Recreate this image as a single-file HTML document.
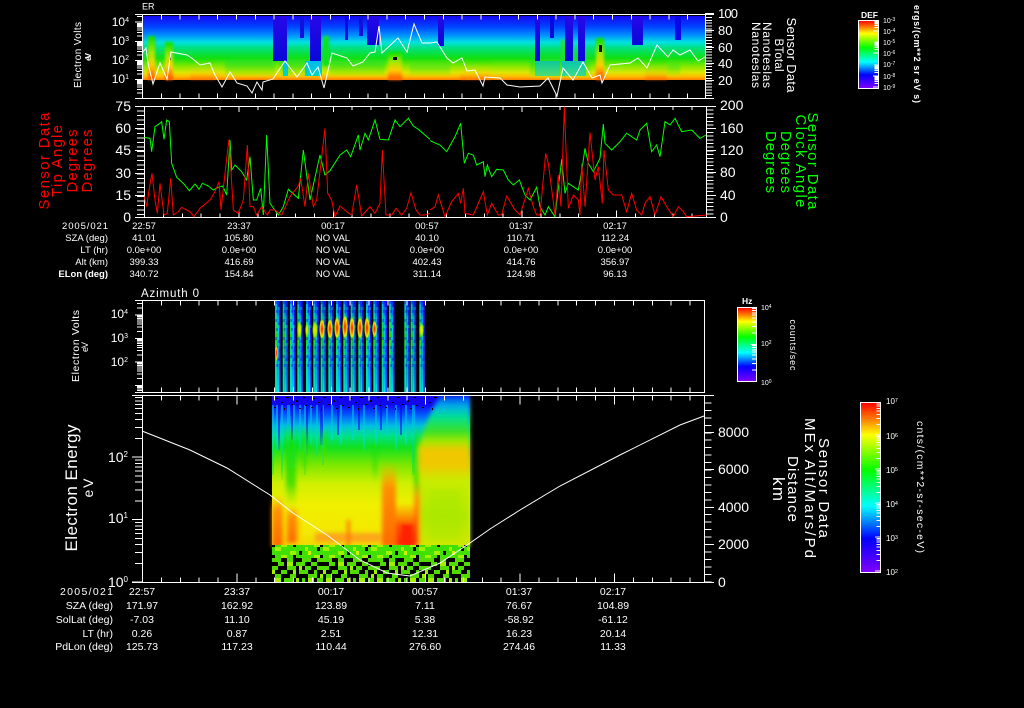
<!DOCTYPE html>
<html><head><meta charset="utf-8"><style>
html,body{margin:0;padding:0;background:#000;width:1024px;height:708px;overflow:hidden}
svg{display:block}
text{font-family:"Liberation Sans",sans-serif;fill:#fff}
.c{text-anchor:middle;font-size:9.5px}
.r{text-anchor:end;font-size:9.5px}
.d{text-anchor:middle;font-size:10.5px}
.q{text-anchor:end;font-size:10.5px}
.n{font-size:14px;text-anchor:end}
.m{font-size:14px}
.a{text-anchor:middle}
.ln{fill:none;vector-effect:non-scaling-stroke;stroke-width:1}
</style></head><body>
<svg width="1024" height="708" viewBox="0 0 1024 708" xmlns="http://www.w3.org/2000/svg">
<defs>
<linearGradient id="rb" x1="0" y1="0" x2="0" y2="1"><stop offset="0" stop-color="#f00"/><stop offset=".1" stop-color="#ff8000"/><stop offset=".19" stop-color="#ff0"/><stop offset=".4" stop-color="#0f0"/><stop offset=".61" stop-color="#0ff"/><stop offset=".8" stop-color="#00f"/><stop offset="1" stop-color="#8000ff"/></linearGradient>
<linearGradient id="g1" gradientUnits="userSpaceOnUse" x1="0" y1="16" x2="0" y2="80"><stop offset="0" stop-color="#1808f0"/><stop offset=".16" stop-color="#0040ff"/><stop offset=".3" stop-color="#0090ff"/><stop offset=".41" stop-color="#00e0e0"/><stop offset=".5" stop-color="#00e080"/><stop offset=".66" stop-color="#10e010"/><stop offset=".78" stop-color="#80e800"/><stop offset=".88" stop-color="#d8e800"/><stop offset=".94" stop-color="#ffc000"/><stop offset="1" stop-color="#ff8000"/></linearGradient>
<linearGradient id="gr" x1="0" y1="0" x2="0" y2="1"><stop offset="0" stop-color="#00e080" stop-opacity="0"/><stop offset=".4" stop-color="#20e020"/><stop offset=".9" stop-color="#a0e800"/><stop offset="1" stop-color="#e0e000"/></linearGradient>
<linearGradient id="hotc" x1="0" y1="0" x2="0" y2="1"><stop offset="0" stop-color="#00e000"/><stop offset=".35" stop-color="#a0e800"/><stop offset=".65" stop-color="#ffd000"/><stop offset=".85" stop-color="#ff8000"/><stop offset="1" stop-color="#ff5000"/></linearGradient>
<linearGradient id="dp" x1="0" y1="0" x2="0" y2="1"><stop offset="0" stop-color="#2808e8"/><stop offset="1" stop-color="#0808d8"/></linearGradient>
<linearGradient id="lowc" x1="0" y1="0" x2="0" y2="1"><stop offset="0" stop-color="#00b8f0"/><stop offset="1" stop-color="#00d8c0"/></linearGradient>
<linearGradient id="g4" gradientUnits="userSpaceOnUse" x1="0" y1="396" x2="0" y2="547"><stop offset="0" stop-color="#1408e8"/><stop offset=".06" stop-color="#1008f0"/><stop offset=".13" stop-color="#0060ff"/><stop offset=".2" stop-color="#00c0e0"/><stop offset=".26" stop-color="#00e090"/><stop offset=".34" stop-color="#10e020"/><stop offset=".46" stop-color="#80e800"/><stop offset=".58" stop-color="#d0f000"/><stop offset=".72" stop-color="#f0f000"/><stop offset=".9" stop-color="#f4e800"/><stop offset="1" stop-color="#f0d800"/></linearGradient>
<linearGradient id="rt" gradientUnits="userSpaceOnUse" x1="0" y1="396" x2="0" y2="547"><stop offset="0" stop-color="#0040f0"/><stop offset=".07" stop-color="#00b0e8"/><stop offset=".14" stop-color="#00e090"/><stop offset=".24" stop-color="#40e020"/><stop offset=".3" stop-color="#a0e800"/><stop offset=".36" stop-color="#f0c800"/><stop offset=".46" stop-color="#f0c800"/><stop offset=".56" stop-color="#c8ec00"/><stop offset=".8" stop-color="#b0e800"/><stop offset="1" stop-color="#d0e800"/></linearGradient>
<linearGradient id="gs" x1="0" y1="0" x2="0" y2="1"><stop offset="0" stop-color="#20e000" stop-opacity="0"/><stop offset=".25" stop-color="#10e010"/><stop offset=".7" stop-color="#50e000"/><stop offset="1" stop-color="#c0e800" stop-opacity="0"/></linearGradient>
<linearGradient id="or" x1="0" y1="0" x2="0" y2="1"><stop offset="0" stop-color="#ffa000" stop-opacity="0"/><stop offset=".3" stop-color="#ff9000"/><stop offset="1" stop-color="#ff6800"/></linearGradient>
<linearGradient id="rd" x1="0" y1="0" x2="0" y2="1"><stop offset="0" stop-color="#ff8000" stop-opacity=".2"/><stop offset=".5" stop-color="#ff4800"/><stop offset="1" stop-color="#ff2000"/></linearGradient>
<linearGradient id="strk" gradientUnits="userSpaceOnUse" x1="0" y1="405" x2="0" y2="490"><stop offset="0" stop-color="#00a0ff" stop-opacity=".7"/><stop offset=".4" stop-color="#00e0c0" stop-opacity=".7"/><stop offset=".75" stop-color="#00e040" stop-opacity=".45"/><stop offset="1" stop-color="#40e000" stop-opacity="0"/></linearGradient>
<linearGradient id="strkb" gradientUnits="userSpaceOnUse" x1="0" y1="400" x2="0" y2="460"><stop offset="0" stop-color="#1000e0" stop-opacity=".8"/><stop offset=".6" stop-color="#0040f0" stop-opacity=".7"/><stop offset="1" stop-color="#00a0e0" stop-opacity="0"/></linearGradient>
<linearGradient id="sa" x1="0" y1="0" x2="0" y2="1"><stop offset="0" stop-color="#00a0ff"/><stop offset=".2" stop-color="#00e0a0"/><stop offset=".37" stop-color="#20e000"/><stop offset=".65" stop-color="#00e0a0"/><stop offset="1" stop-color="#00e0c0"/></linearGradient>
<linearGradient id="sb" x1="0" y1="0" x2="0" y2="1"><stop offset="0" stop-color="#0020ff"/><stop offset=".3" stop-color="#00d0ff"/><stop offset=".65" stop-color="#0080ff"/><stop offset="1" stop-color="#00e0f0"/></linearGradient>
<linearGradient id="sc" x1="0" y1="0" x2="0" y2="1"><stop offset="0" stop-color="#2000e0"/><stop offset="1" stop-color="#0060ff"/></linearGradient>
<radialGradient id="hot"><stop offset="0" stop-color="#ff1000"/><stop offset=".4" stop-color="#ff8000"/><stop offset=".7" stop-color="#f0f000"/><stop offset="1" stop-color="#40e000" stop-opacity="0"/></radialGradient>
<radialGradient id="ywl"><stop offset="0" stop-color="#f0f000"/><stop offset=".6" stop-color="#a0e800"/><stop offset="1" stop-color="#40e000" stop-opacity="0"/></radialGradient>
<filter id="b1" x="-30%" y="-30%" width="160%" height="160%"><feGaussianBlur stdDeviation="1.2"/></filter>
<filter id="b2" x="-40%" y="-30%" width="180%" height="160%"><feGaussianBlur stdDeviation="2"/></filter>
<pattern id="nzA" patternUnits="userSpaceOnUse" x="272" y="547" width="48" height="12">
<rect width="48" height="12" fill="#40e000"/><path fill="#a0f000" d="M3 0h6v4H3zM18 4h6v4h-6zM33 0h3v4h-3zM42 8h6v4h-6zM9 8h6v4H9z"/><path fill="#000" d="M27 4h3v4h-3zM45 0h3v4h-3zM0 8h3v4H0zM21 8h3v4h-3z"/><path fill="#d0f000" d="M36 4h3v4h-3z"/>
</pattern>
<pattern id="nzB" patternUnits="userSpaceOnUse" x="272" y="558" width="51" height="24">
<rect width="51" height="24" fill="#000"/>
<path fill="#50dc00" d="M0 0h9v4H0zM15 0h6v4h-6zM30 0h9v4h-9zM45 0h6v4h-6zM6 4h6v4H6zM24 4h9v4h-9zM39 4h6v4h-6zM0 8h6v4H0zM15 8h9v4h-9zM33 8h6v4h-6zM45 8h6v4h-6zM9 12h6v4H9zM27 12h9v4h-9zM42 12h3v4h-3zM3 16h6v4H3zM18 16h6v4h-6zM36 16h9v4h-9zM12 20h9v4h-9zM30 20h3v4h-3zM45 20h6v4h-6z"/>
<path fill="#a0f000" d="M15 4h6v4h-6zM27 8h3v4h-3zM0 12h3v4H0zM21 12h3v4h-3zM48 16h3v4h-3zM24 20h3v4h-3zM36 20h6v4h-6zM3 20h6v4H3z"/>
</pattern>
<pattern id="spk" patternUnits="userSpaceOnUse" x="272" y="396" width="37" height="15">
<path fill="#000" d="M4 2h2v1H4zM14 1h3v1h-3zM24 4h2v2h-2zM31 1h2v1h-2zM9 6h2v1H9zM19 8h2v1h-2zM33 9h2v1h-2zM2 11h2v1H2zM27 12h2v1h-2zM12 12h1v2h-1z"/>
</pattern>
<pattern id="blot" patternUnits="userSpaceOnUse" x="0" y="301" width="6" height="18">
<path fill="#0010e0" fill-opacity=".4" d="M0 0h2v3H0zM3 3h2v3H3zM1 9h2v3H1zM4 12h2v3H4z"/><path fill="#00d0b0" fill-opacity=".4" d="M3 6h2v3H3zM0 12h2v3H0zM2 15h2v3H2z"/>
</pattern>
<path id="dec" class="ln" stroke="#fff" d="M-5-5.75H0M-5-9.1H0M-5-11.5H0M-5-13.4H0M-5-14.9H0M-5-16.1H0M-5-17.2H0M-5-18.2H0M-7 0H0"/>
<g id="st"><rect x="0" y="301" width="2" height="91" fill="url(#sa)"/><rect x="2" y="301" width="2" height="91" fill="url(#sb)"/><rect x="4" y="301" width="1.5" height="91" fill="url(#sc)"/><rect x="0" y="301" width="5.5" height="70" fill="url(#blot)"/></g>
<clipPath id="c1"><rect x="120" y="14" width="30" height="85"/></clipPath>
<clipPath id="c3"><rect x="120" y="300" width="30" height="93"/></clipPath>
<clipPath id="c4"><rect x="120" y="395" width="30" height="188"/></clipPath>
<clipPath id="cb1"><rect x="858" y="20" width="21" height="69"/></clipPath>
<clipPath id="cb3"><rect x="737" y="307" width="20" height="75"/></clipPath>
<clipPath id="cb4"><rect x="860" y="402" width="21" height="171"/></clipPath>
</defs>
<rect width="1024" height="708" fill="#000"/>

<!-- PANEL 1 spectrogram -->
<g>
<rect x="142" y="16" width="563" height="64" fill="url(#g1)"/>
<g filter="url(#b1)">
<rect x="225" y="58" width="50" height="18" fill="url(#gr)" opacity=".6"/>
<rect x="280" y="58" width="30" height="18" fill="url(#gr)" opacity=".6"/>
<rect x="330" y="58" width="55" height="18" fill="url(#gr)" opacity=".6"/>
<rect x="410" y="62" width="40" height="14" fill="url(#gr)" opacity=".4"/>
<rect x="530" y="55" width="60" height="22" fill="url(#gr)" opacity=".7"/>
<rect x="645" y="62" width="35" height="14" fill="url(#gr)" opacity=".4"/>
<rect x="148" y="36" width="7" height="44" fill="url(#hotc)"/>
<rect x="165" y="42" width="8" height="38" fill="url(#hotc)"/>
<rect x="190" y="60" width="25" height="20" fill="url(#hotc)" opacity=".5"/>
<rect x="323" y="36" width="6" height="30" fill="#10e020"/>
<rect x="388" y="52" width="14" height="28" fill="url(#hotc)"/>
<rect x="460" y="60" width="30" height="20" fill="url(#hotc)" opacity=".5"/>
<rect x="596" y="38" width="8" height="42" fill="url(#hotc)"/>
<rect x="645" y="60" width="22" height="20" fill="url(#hotc)" opacity=".6"/>
<rect x="561" y="40" width="4" height="36" fill="#20e030"/>
</g>
<g>
<rect x="273" y="16" width="14" height="45" fill="url(#dp)"/>
<rect x="310" y="16" width="11" height="45" fill="url(#dp)"/>
<rect x="283" y="61" width="5" height="15" fill="url(#lowc)"/>
<rect x="305" y="61" width="17" height="15" fill="url(#lowc)"/>
<rect x="367" y="16" width="12" height="29" fill="url(#dp)"/>
<rect x="300" y="16" width="4" height="22" fill="#1010e0"/>
<rect x="345" y="16" width="3" height="24" fill="#0808e8"/>
<rect x="438" y="16" width="6" height="30" fill="url(#dp)"/>
<rect x="359" y="16" width="4" height="20" fill="#1010d8"/>
<rect x="535" y="16" width="5" height="45" fill="url(#dp)"/>
<rect x="535" y="61" width="25" height="15" fill="url(#lowc)" opacity=".6"/>
<rect x="565" y="16" width="8" height="45" fill="url(#dp)"/>
<rect x="578" y="16" width="7" height="45" fill="url(#dp)"/>
<rect x="562" y="61" width="24" height="15" fill="url(#lowc)" opacity=".7"/>
<rect x="632" y="16" width="11" height="29" fill="url(#dp)"/>
<rect x="675" y="16" width="6" height="24" fill="#0808e8"/>
<rect x="550" y="16" width="4" height="22" fill="#0808e0"/>
</g>
<path fill="#000" d="M393 57h4v3h-4zM599 45h3v7h-3zM170 57h1v3h-1z"/>
</g>
<polyline class="ln" stroke="#fff" points="142,53 146,48 148,63 153,84 160,63 167,79 171,52 187,55 193,59 200,65 210,63 215,75 222,87 230,72 237,83 247,86 252,93 257,82 262,90 263,82 273,79 285,61 297,77 307,63 312,75 318,67 324,88 332,53 347,58 353,66 363,62 370,53 375,52 379,26 382,53 398,38 407,52 414,24 422,43 430,43 437,42 440,47 447,58 453,63 462,58 467,71 475,70 483,86 485,77 500,78 507,85 520,87 540,86 548,78 557,96 563,68 573,80 583,62 592,78 600,75 602,83 610,65 630,63 638,58 647,68 657,45 668,57 673,50 680,55 690,50 698,61 705,57"/>
<g fill="none" stroke="#fff" shape-rendering="crispEdges">
<path d="M135 14.5H714M135 98.5H714M142.5 14V99M705.5 14V99"/>
<line x1="142" y1="17" x2="705" y2="17" stroke-width="5" stroke-dasharray="1 17.8"/>
<line x1="142" y1="96" x2="705" y2="96" stroke-width="5" stroke-dasharray="1 17.8"/>
<line x1="709" y1="14" x2="709" y2="99" stroke-width="6" stroke-dasharray="1 1.9"/>
<path d="M705 13.5h9M705 30.5h9M705 47.5h9M705 63.5h9M705 80.5h9"/>
</g>
<g clip-path="url(#c1)" shape-rendering="crispEdges"><use href="#dec" transform="translate(142,22)"/><use href="#dec" transform="translate(142,41.5)"/><use href="#dec" transform="translate(142,60.5)"/><use href="#dec" transform="translate(142,79.5)"/><use href="#dec" transform="translate(142,98.5)"/></g>
<text x="142" y="9.5" font-size="9">ER</text>
<g text-anchor="end" font-size="12"><text x="129" y="26">10<tspan dy="-4" font-size="7">4</tspan></text><text x="129" y="45">10<tspan dy="-4" font-size="7">3</tspan></text><text x="129" y="64">10<tspan dy="-4" font-size="7">2</tspan></text><text x="129" y="83">10<tspan dy="-4" font-size="7">1</tspan></text></g>
<text class="a" transform="translate(81,55) rotate(-90)" font-size="10" textLength="66">Electron Volts</text>
<text class="a" transform="translate(91,57) rotate(-90)" font-size="8.5" textLength="8" font-weight="bold">eV</text>
<g font-size="13"><text x="718" y="18" textLength="20">100</text><text x="718" y="35">80</text><text x="718" y="52">60</text><text x="718" y="68">40</text><text x="718" y="85">20</text></g>
<text class="a" transform="translate(787,55) rotate(90)" font-size="13" textLength="75">Sensor Data</text>
<text class="a" transform="translate(775,55) rotate(90)" font-size="11.5" textLength="33">BTotal</text>
<text class="a" transform="translate(763,55) rotate(90)" font-size="12" textLength="66">Nanoteslas</text>
<text class="a" transform="translate(752,55) rotate(90)" font-size="12" textLength="66">Nanoteslas</text>
<rect x="858.5" y="20.5" width="20" height="68" fill="url(#rb)" stroke="#fff" shape-rendering="crispEdges"/>
<g clip-path="url(#cb1)" shape-rendering="crispEdges"><use href="#dec" transform="translate(878,31) scale(.7,.6)"/><use href="#dec" transform="translate(878,53) scale(.7,.6)"/><use href="#dec" transform="translate(878,76) scale(.7,.6)"/><use href="#dec" transform="translate(878,87) scale(.7,.6)"/></g>
<text x="861" y="18" font-size="8.5" font-weight="bold">DEF</text>
<g font-size="7"><text x="883" y="23">10<tspan dy="-2" font-size="5">-3</tspan></text><text x="883" y="34">10<tspan dy="-2" font-size="5">-4</tspan></text><text x="883" y="45">10<tspan dy="-2" font-size="5">-5</tspan></text><text x="883" y="56">10<tspan dy="-2" font-size="5">-6</tspan></text><text x="883" y="67">10<tspan dy="-2" font-size="5">-7</tspan></text><text x="883" y="79">10<tspan dy="-2" font-size="5">-8</tspan></text><text x="883" y="90">10<tspan dy="-2" font-size="5">-9</tspan></text></g>
<text class="a" transform="translate(914,54) rotate(90)" font-size="9" font-weight="bold" textLength="98">ergs/(cm**2 sr eV s)</text>

<!-- PANEL 2 -->
<g fill="none" stroke="#fff" shape-rendering="crispEdges">
<path d="M135 106.5H716M135 217.5H716M144.5 106V218M706.5 106V218"/>
<line x1="144" y1="108" x2="706" y2="108" stroke-width="4" stroke-dasharray="1 17.88"/>
<line x1="144" y1="215.5" x2="706" y2="215.5" stroke-width="4" stroke-dasharray="1 17.88"/>
<line x1="144" y1="109" x2="706" y2="109" stroke-width="6" stroke-dasharray="1 93.4"/>
<line x1="144" y1="214" x2="706" y2="214" stroke-width="7" stroke-dasharray="1 93.4"/>
<line x1="140.5" y1="106" x2="140.5" y2="218" stroke-width="7" stroke-dasharray="1 3.5"/>
<line x1="710" y1="106" x2="710" y2="218" stroke-width="7" stroke-dasharray="1 2.7"/>
<path d="M135 128.5h9M135 150.5h9M135 173.5h9M135 195.5h9M706 128.5h10M706 150.5h10M706 172.5h10M706 195.5h10"/>
</g>
<g fill="none" transform="translate(30,100) scale(.33333)">
<polyline class="ln" stroke="#00ff00" points="343,112 360,115 365,155 375,80 390,70 395,65 402,118 410,60 418,65 425,190 440,232 460,250 478,272 495,252 507,268 517,250 535,258 550,270 565,262 578,258 590,285 600,120 605,210 615,195 635,215 650,240 660,170 670,300 680,300 692,265 700,345 710,105 720,310 745,345 760,320 775,268 805,295 820,150 840,300 870,165 885,225 900,212 930,165 950,150 962,170 985,105 990,150 1005,100 1015,120 1035,60 1050,118 1075,120 1095,60 1110,80 1135,55 1150,78 1165,88 1200,118"/>
<polyline class="ln" stroke="#ff0000" points="343,290 350,320 357,270 366,220 375,300 382,340 390,250 402,345 412,340 422,235 430,345 445,335 455,322 480,335 492,350 510,325 540,300 555,275 567,245 573,330 585,220 597,118 610,330 625,340 640,300 652,135 660,320 670,320 680,345 695,320 712,345 720,330 735,330 755,345 780,290 805,258 812,235 825,320 835,220 850,320 860,300 885,85 893,280 905,300 915,350 930,318 950,335 965,345 980,255 995,348 1020,320 1035,340 1050,310 1057,150 1068,345 1085,345 1098,325 1115,345 1130,325 1143,278 1158,330 1170,345 1185,345 1200,340"/>
</g>
<g fill="none" transform="translate(430,100) scale(.33333)">
<polyline class="ln" stroke="#00ff00" points="0,122 30,135 50,155 75,110 92,70 103,190 115,160 130,165 140,195 160,185 165,230 172,195 185,230 200,208 220,210 235,240 250,255 268,240 285,285 300,300 320,262 330,320 345,345 355,320 375,350 395,178 405,280 415,250 445,270 455,215 465,145 475,190 490,215 510,175 520,72 525,130 545,150 570,125 590,100 620,120 630,90 650,70 665,155 680,135 690,170 705,65 720,75 735,55 755,95 785,90 810,115 828,105"/>
<polyline class="ln" stroke="#ff0000" points="0,330 15,320 25,285 45,350 65,305 85,280 92,310 100,265 105,340 130,345 160,275 172,345 185,310 205,345 215,345 230,288 255,330 270,345 295,265 310,320 320,345 330,345 347,160 355,190 375,345 385,225 393,320 403,20 415,325 430,285 445,300 450,345 455,190 465,320 480,98 495,240 505,200 517,310 522,150 535,270 550,285 575,285 590,335 605,280 620,330 635,345 645,310 660,290 675,345 693,290 710,320 730,350 745,320 760,335 770,350 830,345"/>
</g>
<g class="m"><text class="n" x="131" y="111">75</text><text class="n" x="131" y="133">60</text><text class="n" x="131" y="155">45</text><text class="n" x="131" y="178">30</text><text class="n" x="131" y="200">15</text><text class="n" x="131" y="222">0</text></g>
<g class="m"><text x="720" y="110">200</text><text x="720" y="133">160</text><text x="720" y="155">120</text><text x="720" y="177">80</text><text x="720" y="200">40</text><text x="720" y="222">0</text></g>
<g style="fill:#f00"><text class="a" style="fill:#f00" transform="translate(49,161) rotate(-90)" font-size="15" textLength="97">Sensor Data</text>
<text class="a" style="fill:#f00" transform="translate(62,161) rotate(-90)" font-size="15" textLength="72">Tip Angle</text>
<text class="a" style="fill:#f00" transform="translate(77,161) rotate(-90)" font-size="15" textLength="63">Degrees</text>
<text class="a" style="fill:#f00" transform="translate(92,161) rotate(-90)" font-size="15" textLength="63">Degrees</text></g>
<text class="a" style="fill:#0f0" transform="translate(808,161) rotate(90)" font-size="15" textLength="97">Sensor Data</text>
<text class="a" style="fill:#0f0" transform="translate(796,161) rotate(90)" font-size="15" textLength="93">Clock Angle</text>
<text class="a" style="fill:#0f0" transform="translate(781,162) rotate(90)" font-size="15" textLength="62">Degrees</text>
<text class="a" style="fill:#0f0" transform="translate(766,162) rotate(90)" font-size="15" textLength="62">Degrees</text>

<g>
<text class="r" x="108" y="229" textLength="46">2005/021</text><text class="r" x="108" y="241">SZA (deg)</text><text class="r" x="108" y="253">LT (hr)</text><text class="r" x="108" y="265">Alt (km)</text><text class="r" x="108" y="277" font-weight="bold">ELon (deg)</text>
<text class="c" x="144" y="229">22:57</text><text class="c" x="239" y="229">23:37</text><text class="c" x="333" y="229">00:17</text><text class="c" x="427" y="229">00:57</text><text class="c" x="521" y="229">01:37</text><text class="c" x="615" y="229">02:17</text>
<text class="c" x="144" y="241">41.01</text><text class="c" x="239" y="241">105.80</text><text class="c" x="333" y="241">NO VAL</text><text class="c" x="427" y="241">40.10</text><text class="c" x="521" y="241">110.71</text><text class="c" x="615" y="241">112.24</text>
<text class="c" x="144" y="253">0.0e+00</text><text class="c" x="239" y="253">0.0e+00</text><text class="c" x="333" y="253">NO VAL</text><text class="c" x="427" y="253">0.0e+00</text><text class="c" x="521" y="253">0.0e+00</text><text class="c" x="615" y="253">0.0e+00</text>
<text class="c" x="144" y="265">399.33</text><text class="c" x="239" y="265">416.69</text><text class="c" x="333" y="265">NO VAL</text><text class="c" x="427" y="265">402.43</text><text class="c" x="521" y="265">414.76</text><text class="c" x="615" y="265">356.97</text>
<text class="c" x="144" y="277">340.72</text><text class="c" x="239" y="277">154.84</text><text class="c" x="333" y="277">NO VAL</text><text class="c" x="427" y="277">311.14</text><text class="c" x="521" y="277">124.98</text><text class="c" x="615" y="277">96.13</text>
</g>

<!-- PANEL 3 -->
<g>
<use href="#st" x="275"/><use href="#st" x="282.7"/><use href="#st" x="290"/><use href="#st" x="297.3"/><use href="#st" x="306"/><use href="#st" x="313.3"/><use href="#st" x="320.7"/><use href="#st" x="328.3"/><use href="#st" x="336"/><use href="#st" x="343.3"/><use href="#st" x="350.7"/><use href="#st" x="358.3"/><use href="#st" x="366"/><use href="#st" x="373.3"/><use href="#st" x="381.7"/><use href="#st" x="389"/><use href="#st" x="404.3"/><use href="#st" x="410.7"/><use href="#st" x="419.3"/>
<rect x="297" y="320" width="5" height="20" fill="url(#ywl)"/><rect x="305" y="322" width="4" height="16" fill="url(#ywl)"/><rect x="312" y="320" width="6" height="20" fill="url(#ywl)"/><rect x="419" y="322" width="5" height="16" fill="url(#ywl)"/>
<rect x="319" y="318" width="6" height="22" fill="url(#hot)"/><rect x="327" y="318" width="6" height="22" fill="url(#hot)"/><rect x="334" y="316" width="6" height="24" fill="url(#hot)"/><rect x="342" y="314" width="6" height="26" fill="url(#hot)"/><rect x="349" y="316" width="6" height="24" fill="url(#hot)"/><rect x="357" y="316" width="6" height="24" fill="url(#hot)"/><rect x="364" y="316" width="6" height="24" fill="url(#hot)"/><rect x="372" y="320" width="5" height="18" fill="url(#hot)"/>
<rect x="275" y="345" width="3" height="16" fill="url(#hot)"/>
</g>
<g fill="none" stroke="#fff" shape-rendering="crispEdges">
<path d="M135 300.5H705M135 392.5H705M142.5 300V393M704.5 300V393"/>
<line x1="142" y1="303" x2="704" y2="303" stroke-width="5" stroke-dasharray="1 17.88"/>
<line x1="142" y1="390" x2="704" y2="390" stroke-width="5" stroke-dasharray="1 17.88"/>
</g>
<g clip-path="url(#c3)" shape-rendering="crispEdges"><use href="#dec" transform="translate(142,315) scale(1,1.24)"/><use href="#dec" transform="translate(142,338.5) scale(1,1.24)"/><use href="#dec" transform="translate(142,362) scale(1,1.24)"/><use href="#dec" transform="translate(142,385.5) scale(1,1.24)"/><use href="#dec" transform="translate(142,409) scale(1,1.24)"/></g>
<text x="141" y="297" font-size="11.5" textLength="58">Azimuth 0</text>
<g text-anchor="end" font-size="12"><text x="128" y="318">10<tspan dy="-4" font-size="7">4</tspan></text><text x="128" y="342">10<tspan dy="-4" font-size="7">3</tspan></text><text x="128" y="366">10<tspan dy="-4" font-size="7">2</tspan></text></g>
<text class="a" transform="translate(79,346) rotate(-90)" font-size="10.5" textLength="72">Electron Volts</text>
<text class="a" transform="translate(88,347) rotate(-90)" font-size="9" textLength="10">eV</text>
<rect x="737.5" y="307.5" width="19" height="74" fill="url(#rb)" stroke="#fff" shape-rendering="crispEdges"/>
<g clip-path="url(#cb3)" shape-rendering="crispEdges"><use href="#dec" transform="translate(756,344.5) scale(.8,1.97)"/><use href="#dec" transform="translate(756,381.5) scale(.8,1.97)"/></g>
<text x="742" y="304" font-size="8.5" font-weight="bold">Hz</text>
<g font-size="7"><text x="761" y="310">10<tspan dy="-2" font-size="5">4</tspan></text><text x="761" y="346">10<tspan dy="-2" font-size="5">2</tspan></text><text x="761" y="385">10<tspan dy="-2" font-size="5">0</tspan></text></g>
<text class="a" transform="translate(790,345) rotate(90)" font-size="9" textLength="51">counts/sec</text>

<!-- PANEL 4 -->
<g>
<rect x="272" y="396" width="198" height="151" fill="url(#g4)"/>
<path d="M272 405h2v70h-2zM276 405h2v45h-2zM281 405h2v75h-2zM287 405h3v80h-3zM293 405h2v60h-2zM299 405h2v45h-2zM304 405h2v70h-2zM310 405h2v40h-2zM316 405h2v50h-2zM322 405h2v60h-2zM331 405h2v35h-2zM340 405h2v40h-2zM352 405h2v35h-2zM363 405h2v45h-2zM375 405h2v40h-2zM386 405h2v30h-2zM395 405h2v45h-2zM405 405h2v40h-2zM412 405h3v70h-3z" fill="url(#strk)"/>
<path d="M278 400h2v50h-2zM291 400h2v40h-2zM306 400h2v55h-2zM320 400h3v45h-3zM337 400h2v35h-2zM358 400h2v30h-2zM380 400h2v30h-2zM400 400h2v35h-2z" fill="url(#strkb)"/>
<g filter="url(#b2)">
<path d="M440 396H470V547H418V455Q422 425 440 396z" fill="url(#rt)"/>
<rect x="286" y="425" width="10" height="85" fill="url(#gs)"/>
<rect x="302" y="425" width="5" height="55" fill="url(#gs)"/>
<rect x="322" y="428" width="4" height="40" fill="url(#gs)"/>
<rect x="414" y="425" width="5" height="90" fill="url(#gs)"/>
<rect x="373" y="440" width="4" height="45" fill="url(#gs)" opacity=".8"/>
<rect x="430" y="490" width="30" height="50" fill="#a0e800" opacity=".35"/>
<rect x="272" y="495" width="11" height="52" fill="url(#or)"/>
<rect x="287" y="505" width="10" height="38" fill="url(#or)"/>
<rect x="297" y="520" width="4" height="24" fill="#f8d000"/>
<rect x="382" y="462" width="14" height="85" fill="url(#or)"/>
<rect x="414" y="480" width="6" height="65" fill="url(#or)"/>
<rect x="396" y="505" width="21" height="42" fill="url(#rd)"/>
<rect x="315" y="533" width="66" height="9" fill="#ff9020" opacity=".75"/>
<rect x="347" y="520" width="3" height="27" fill="#ff7000"/>
</g>
<rect x="402" y="525" width="10" height="20" fill="#ff2000" filter="url(#b1)"/>
<rect x="272" y="396" width="165" height="15" fill="url(#spk)"/>
<rect x="272" y="545" width="198" height="13" fill="url(#nzA)"/>
<rect x="272" y="558" width="198" height="24" fill="url(#nzB)"/>
</g>
<polyline class="ln" stroke="#fff" points="142,431 190,450 227,468 270,495 293,513 327,535 360,560 387,573 410,576 440,563 470,543 490,529 520,510 560,486 620,455 680,425 704,416"/>
<g fill="none" stroke="#fff" shape-rendering="crispEdges">
<path d="M132 395.5H714M132 582.5H714M142.5 395V583M704.5 395V583"/>
<line x1="142" y1="398" x2="704" y2="398" stroke-width="5" stroke-dasharray="1 17.88"/>
<line x1="142" y1="580" x2="704" y2="580" stroke-width="5" stroke-dasharray="1 17.88"/>
<line x1="142" y1="400" x2="704" y2="400" stroke-width="9" stroke-dasharray="1 93.4"/>
<line x1="142" y1="578" x2="704" y2="578" stroke-width="9" stroke-dasharray="1 93.4"/>
<line x1="708" y1="395" x2="708" y2="583" stroke-width="7" stroke-dasharray="1 6.45"/>
<path d="M704 432.5h10M704 469.5h10M704 507.5h10M704 544.5h10"/>
</g>
<g clip-path="url(#c4)" shape-rendering="crispEdges"><use href="#dec" transform="translate(142,457) scale(1.4,3.26)"/><use href="#dec" transform="translate(142,519.5) scale(1.4,3.26)"/><use href="#dec" transform="translate(142,582) scale(1.4,3.26)"/></g>
<g text-anchor="end" font-size="14"><text x="128" y="462">10<tspan dy="-5" font-size="8">2</tspan></text><text x="128" y="523">10<tspan dy="-5" font-size="8">1</tspan></text><text x="128" y="587">10<tspan dy="-5" font-size="8">0</tspan></text></g>
<text class="a" transform="translate(77,488) rotate(-90)" font-size="17" textLength="127">Electron Energy</text>
<text class="a" transform="translate(93,488) rotate(-90)" font-size="14" textLength="19">eV</text>
<g font-size="14"><text x="718" y="437" textLength="31">8000</text><text x="718" y="474" textLength="31">6000</text><text x="718" y="512" textLength="31">4000</text><text x="718" y="549" textLength="31">2000</text><text x="718" y="587">0</text></g>
<text class="a" transform="translate(819,488) rotate(90)" font-size="15" textLength="100">Sensor Data</text>
<text class="a" transform="translate(805,488) rotate(90)" font-size="15" textLength="140">MEx Alt/Mars/Pd</text>
<text class="a" transform="translate(788,489) rotate(90)" font-size="15" textLength="66">Distance</text>
<text class="a" transform="translate(773,489) rotate(90)" font-size="17" textLength="24">km</text>
<rect x="860.5" y="402.5" width="20" height="170" fill="url(#rb)" stroke="#fff" shape-rendering="crispEdges"/>
<g clip-path="url(#cb4)" shape-rendering="crispEdges"><use href="#dec" transform="translate(880,435) scale(.7,1.79)"/><use href="#dec" transform="translate(880,469) scale(.7,1.79)"/><use href="#dec" transform="translate(880,503) scale(.7,1.79)"/><use href="#dec" transform="translate(880,537) scale(.7,1.79)"/><use href="#dec" transform="translate(880,571) scale(.7,1.79)"/></g>
<g font-size="8"><text x="886" y="404">10<tspan dy="-2" font-size="5.5">7</tspan></text><text x="886" y="439">10<tspan dy="-2" font-size="5.5">6</tspan></text><text x="886" y="473">10<tspan dy="-2" font-size="5.5">5</tspan></text><text x="886" y="507">10<tspan dy="-2" font-size="5.5">4</tspan></text><text x="886" y="541">10<tspan dy="-2" font-size="5.5">3</tspan></text><text x="886" y="575">10<tspan dy="-2" font-size="5.5">2</tspan></text></g>
<text class="a" transform="translate(917,487) rotate(90)" font-size="10.5" textLength="132">cnts/(cm**2-sr-sec-eV)</text>

<g>
<text class="q" x="113" y="595" textLength="53">2005/021</text><text class="q" x="113" y="609">SZA (deg)</text><text class="q" x="113" y="623">SolLat (deg)</text><text class="q" x="113" y="637">LT (hr)</text><text class="q" x="113" y="650">PdLon (deg)</text>
<text class="d" x="142" y="595">22:57</text><text class="d" x="237" y="595">23:37</text><text class="d" x="331" y="595">00:17</text><text class="d" x="425" y="595">00:57</text><text class="d" x="519" y="595">01:37</text><text class="d" x="613" y="595">02:17</text>
<text class="d" x="142" y="609">171.97</text><text class="d" x="237" y="609">162.92</text><text class="d" x="331" y="609">123.89</text><text class="d" x="425" y="609">7.11</text><text class="d" x="519" y="609">76.67</text><text class="d" x="613" y="609">104.89</text>
<text class="d" x="142" y="623">-7.03</text><text class="d" x="237" y="623">11.10</text><text class="d" x="331" y="623">45.19</text><text class="d" x="425" y="623">5.38</text><text class="d" x="519" y="623">-58.92</text><text class="d" x="613" y="623">-61.12</text>
<text class="d" x="142" y="637">0.26</text><text class="d" x="237" y="637">0.87</text><text class="d" x="331" y="637">2.51</text><text class="d" x="425" y="637">12.31</text><text class="d" x="519" y="637">16.23</text><text class="d" x="613" y="637">20.14</text>
<text class="d" x="142" y="650">125.73</text><text class="d" x="237" y="650">117.23</text><text class="d" x="331" y="650">110.44</text><text class="d" x="425" y="650">276.60</text><text class="d" x="519" y="650">274.46</text><text class="d" x="613" y="650">11.33</text>
</g>
</svg>
</body></html>
